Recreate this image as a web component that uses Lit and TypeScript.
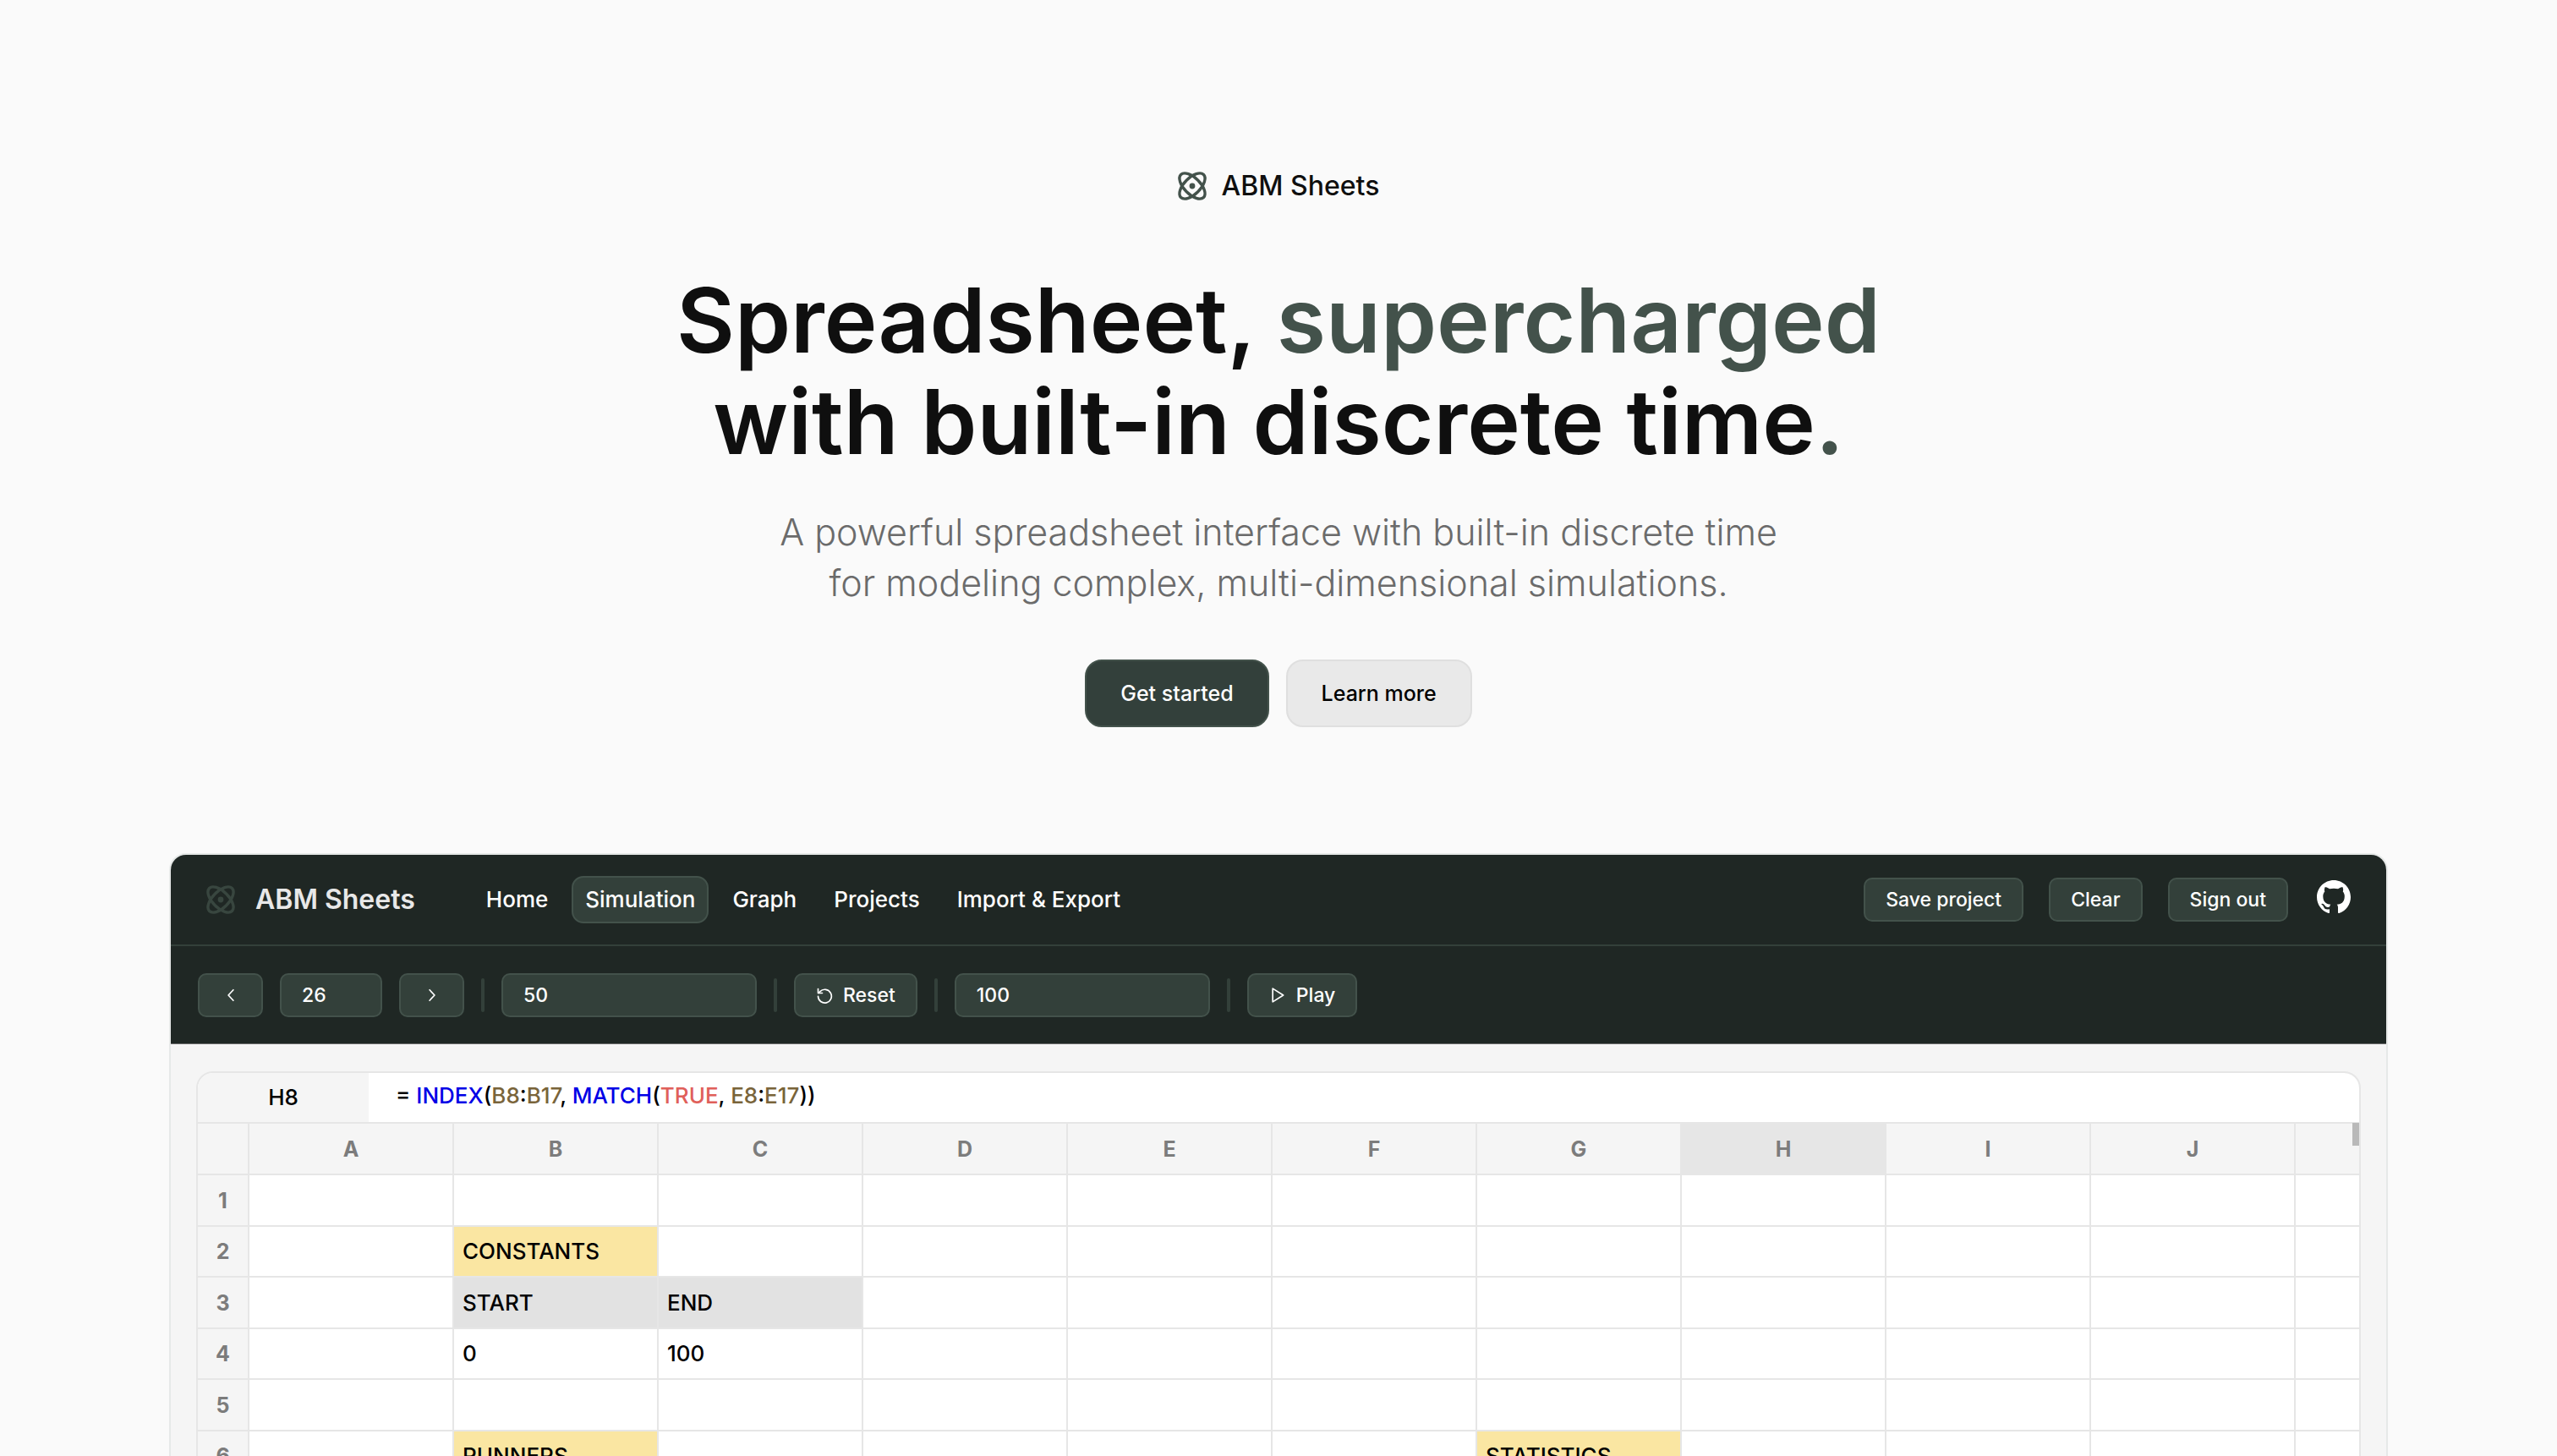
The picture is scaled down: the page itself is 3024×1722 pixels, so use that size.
import { LitElement, html, css, svg } from "lit";
import { customElement } from "lit/decorators.js";

const atom = html`<svg class="atom" viewBox="0 0 34 34" fill="none" stroke="currentColor" stroke-width="3.4" aria-hidden="true">
  <ellipse cx="17" cy="17" rx="19" ry="9.6" transform="rotate(45 17 17)"></ellipse>
  <ellipse cx="17" cy="17" rx="19" ry="9.6" transform="rotate(-45 17 17)"></ellipse>
  <circle cx="17" cy="17" r="3.4" fill="currentColor" stroke="none"></circle>
</svg>`;

const icon = (body: unknown) =>
  html`<svg class="icon" viewBox="0 0 24 24" fill="none" stroke="currentColor" stroke-width="2" stroke-linejoin="round" stroke-linecap="round" aria-hidden="true">${body}</svg>`;

const chevronLeft = svg`<path d="M15.5 4.5 L8.5 12 L15.5 19.5"></path>`;
const chevronRight = svg`<path d="M8.5 4.5 L15.5 12 L8.5 19.5"></path>`;
const resetIcon = svg`<path d="M3 3v6h6"></path><path d="M3 13.5a9.5 9.5 0 1 0 2.8-6.8L3.5 9"></path>`;
const playIcon = svg`<path d="M5 2.5 L20 12 L5 21.5 Z"></path>`;

type Cell = { text?: string; tone?: "title" | "label" };

const COLUMNS = ["A", "B", "C", "D", "E", "F", "G", "H", "I", "J"];
const ACTIVE_COLUMN = "H";
const ROWS = [1, 2, 3, 4, 5, 6, 7];
const CELLS: Record<string, Cell> = {
  B2: { text: "CONSTANTS", tone: "title" },
  B3: { text: "START", tone: "label" },
  C3: { text: "END", tone: "label" },
  B4: { text: "0" },
  C4: { text: "100" },
  B6: { text: "RUNNERS", tone: "title" },
  G6: { text: "STATISTICS", tone: "title" },
};

@customElement("sheet-grid")
export class SheetGrid extends LitElement {
  static styles = css`
    :host { display: block; }
    .card {
      position: relative;
      border: 2px solid #e6e6e6;
      border-radius: 20px;
      overflow: hidden;
      background: #fff;
      font-size: 26px;
      line-height: 32px;
      font-weight: 500;
      color: #000;
    }
    .bar {
      display: flex;
      height: 58px;
      border-bottom: 2px solid #e6e6e6;
    }
    .name {
      display: flex;
      align-items: center;
      justify-content: center;
      width: 202px;
      background: #f5f5f5;
    }
    .formula {
      flex: 1;
      margin: 0;
      padding: 11px 32px;
    }
    .fn { color: #0000e6; }
    .ref { color: #79643a; }
    .bool { color: #e0605a; }
    .grid {
      width: 100%;
      table-layout: fixed;
      border-collapse: separate;
      border-spacing: 0;
    }
    .corner { width: 61px; }
    .col { width: 242px; }
    tr { height: 60px; }
    tr:nth-child(odd) { height: 61px; }
    th, td {
      box-sizing: border-box;
      padding: 0 10px;
      border-right: 2px solid #e6e6e6;
      border-bottom: 2px solid #e6e6e6;
      white-space: nowrap;
      overflow: hidden;
    }
    th {
      padding: 0;
      background: #f5f5f5;
      color: #7c7c7c;
      font-size: 25px;
      font-weight: 700;
      text-align: center;
    }
    td { text-align: left; }
    th:last-child, td:last-child { border-right: 0; }
    .active { background: #e6e6e6; }
    .title { background: #fae6a2; }
    .label { background: #e2e2e2; }
    .thumb {
      position: absolute;
      right: 0;
      top: 59px;
      width: 8px;
      height: 27px;
      background: #b9b9b9;
    }
  `;

  render() {
    return html`
      <div class="card">
        <div class="bar">
          <span class="name">H8</span>
          <p class="formula">= <span class="fn">INDEX</span>(<span class="ref">B8</span>:<span class="ref">B17</span>, <span class="fn">MATCH</span>(<span class="bool">TRUE</span>, <span class="ref">E8</span>:<span class="ref">E17</span>))</p>
        </div>
        <table class="grid">
          <thead>
            <tr>
              <th class="corner"></th>
              ${COLUMNS.map((c) => html`<th scope="col" class="col ${c === ACTIVE_COLUMN ? "active" : ""}">${c}</th>`)}
              <th></th>
            </tr>
          </thead>
          <tbody>
            ${ROWS.map((r) => html`<tr>
              <th scope="row">${r}</th>
              ${COLUMNS.map((c) => {
                const cell = CELLS[c + r];
                return html`<td class=${cell?.tone ?? ""}>${cell?.text ?? ""}</td>`;
              })}
              <td></td>
            </tr>`)}
          </tbody>
        </table>
        <div class="thumb"></div>
      </div>
    `;
  }
}

@customElement("app-root")
export class AppRoot extends LitElement {
  static styles = css`
    :host {
      display: block;
      height: 100vh;
      overflow: hidden;
      background: #fafafa;
      color: #0f0f0f;
      font-family: Inter, "Liberation Sans", sans-serif;
    }
    button, input { font: inherit; color: inherit; margin: 0; }
    a { color: inherit; text-decoration: none; }
    .hero {
      display: flex;
      flex-direction: column;
      align-items: center;
      padding: 196px 200px 149px;
      text-align: center;
    }
    .brand {
      display: flex;
      align-items: center;
      gap: 18px;
      font-size: 32px;
      line-height: 48px;
      font-weight: 500;
    }
    .atom { width: 34px; height: 34px; color: #43524b; overflow: visible; }
    h1 {
      margin: 75px 0 0;
      font-size: 106px;
      line-height: 120px;
      font-weight: 600;
    }
    .accent { color: #43524b; }
    .lead {
      margin: 40px 0 0;
      font-size: 43px;
      line-height: 60px;
      font-weight: 300;
      color: #6b6b6b;
    }
    .actions { display: flex; gap: 20px; margin-top: 61px; }
    .cta {
      padding: 22px 40px;
      border: 2px solid #dfdfdf;
      border-radius: 20px;
      background: #e9e9e9;
      color: #000;
      font-size: 25px;
      line-height: 32px;
      font-weight: 500;
    }
    .cta.primary { background: #33403b; border-color: #43524b; color: #fff; }

    .window {
      margin: 0 200px;
      border: 2px solid #e6e9e8;
      border-radius: 20px 20px 0 0;
      overflow: hidden;
      background: #f5f5f5;
    }
    .dark { background: #1f2724; color: #fff; }
    .nav {
      display: flex;
      align-items: center;
      height: 106px;
      padding: 0 42px;
      border-bottom: 2px solid #33403a;
      font-size: 26px;
      line-height: 32px;
      font-weight: 500;
    }
    .nav .brand { gap: 24px; color: #e8e8e8; font-weight: 600; }
    .nav .atom { color: #38463f; }
    .links { display: flex; gap: 12px; margin-left: 68px; }
    .link { padding: 10px 14px; border: 2px solid transparent; border-radius: 14px; }
    .link.on { background: #33403a; border-color: #43524b; }
    .account { display: flex; align-items: center; gap: 30px; margin-left: auto; }
    .control {
      box-sizing: border-box;
      height: 52px;
      padding: 0 24px;
      border: 2px solid #43524b;
      border-radius: 10px;
      background: #33403a;
      color: #fff;
      font-size: 23px;
      line-height: 32px;
      font-weight: 500;
    }
    .github { display: flex; justify-content: flex-end; width: 44px; height: 46px; }
    .github svg { width: 40px; height: 40px; }
    .tools {
      display: flex;
      align-items: center;
      gap: 20px;
      height: 115px;
      padding: 0 32px;
      border-bottom: 1px solid #6a6a6a;
    }
    .step { display: flex; align-items: center; justify-content: center; width: 77px; }
    .short { width: 121px; }
    .long { width: 302px; }
    .sep { width: 4px; height: 40px; border-radius: 2px; background: #33403a; }
    .run { display: flex; align-items: center; gap: 12px; }
    .icon { width: 20px; height: 20px; }
    .sheet { padding: 32px 30px; }
  `;

  render() {
    return html`
      <header class="hero">
        <div class="brand">${atom}<span>ABM Sheets</span></div>
        <h1>Spreadsheet, <span class="accent">supercharged</span><br />with built-in discrete time<span class="accent">.</span></h1>
        <p class="lead">A powerful spreadsheet interface with built-in discrete time<br />for modeling complex, multi-dimensional simulations.</p>
        <div class="actions">
          <button class="cta primary">Get started</button>
          <button class="cta">Learn more</button>
        </div>
      </header>
      <main class="window">
        <nav class="nav dark">
          <div class="brand">${atom}<span>ABM Sheets</span></div>
          <div class="links">
            ${["Home", "Simulation", "Graph", "Projects", "Import & Export"].map(
              (t) => html`<a href="#" class="link ${t === "Simulation" ? "on" : ""}">${t}</a>`
            )}
          </div>
          <div class="account">
            ${["Save project", "Clear", "Sign out"].map((t) => html`<button class="control">${t}</button>`)}
            <a class="github" href="#" aria-label="GitHub">
              <svg viewBox="0 0 16 16" fill="currentColor" aria-hidden="true"><path d="M8 0C3.58 0 0 3.58 0 8c0 3.54 2.29 6.53 5.47 7.59.4.07.55-.17.55-.38 0-.19-.01-.82-.01-1.49-2.01.37-2.53-.49-2.69-.94-.09-.23-.48-.94-.82-1.13-.28-.15-.68-.52-.01-.53.63-.01 1.08.58 1.23.82.72 1.21 1.87.87 2.33.66.07-.52.28-.87.51-1.07-1.78-.2-3.64-.89-3.64-3.95 0-.87.31-1.59.82-2.15-.08-.2-.36-1.02.08-2.12 0 0 .67-.21 2.2.82.64-.18 1.32-.27 2-.27s1.36.09 2 .27c1.53-1.04 2.2-.82 2.2-.82.44 1.1.16 1.92.08 2.12.51.56.82 1.27.82 2.15 0 3.07-1.87 3.75-3.65 3.95.29.25.54.73.54 1.48 0 1.07-.01 1.93-.01 2.2 0 .21.15.46.55.38A8.01 8.01 0 0 0 16 8c0-4.42-3.58-8-8-8z"></path></svg>
            </a>
          </div>
        </nav>
        <div class="tools dark">
          <button class="control step" aria-label="Previous step">${icon(chevronLeft)}</button>
          <input class="control short" aria-label="Step" value="26" />
          <button class="control step" aria-label="Next step">${icon(chevronRight)}</button>
          <span class="sep"></span>
          <input class="control long" aria-label="Number of steps" value="50" />
          <span class="sep"></span>
          <button class="control run">${icon(resetIcon)}Reset</button>
          <span class="sep"></span>
          <input class="control long" aria-label="Delay" value="100" />
          <span class="sep"></span>
          <button class="control run">${icon(playIcon)}Play</button>
        </div>
        <section class="sheet"><sheet-grid></sheet-grid></section>
      </main>
    `;
  }
}
